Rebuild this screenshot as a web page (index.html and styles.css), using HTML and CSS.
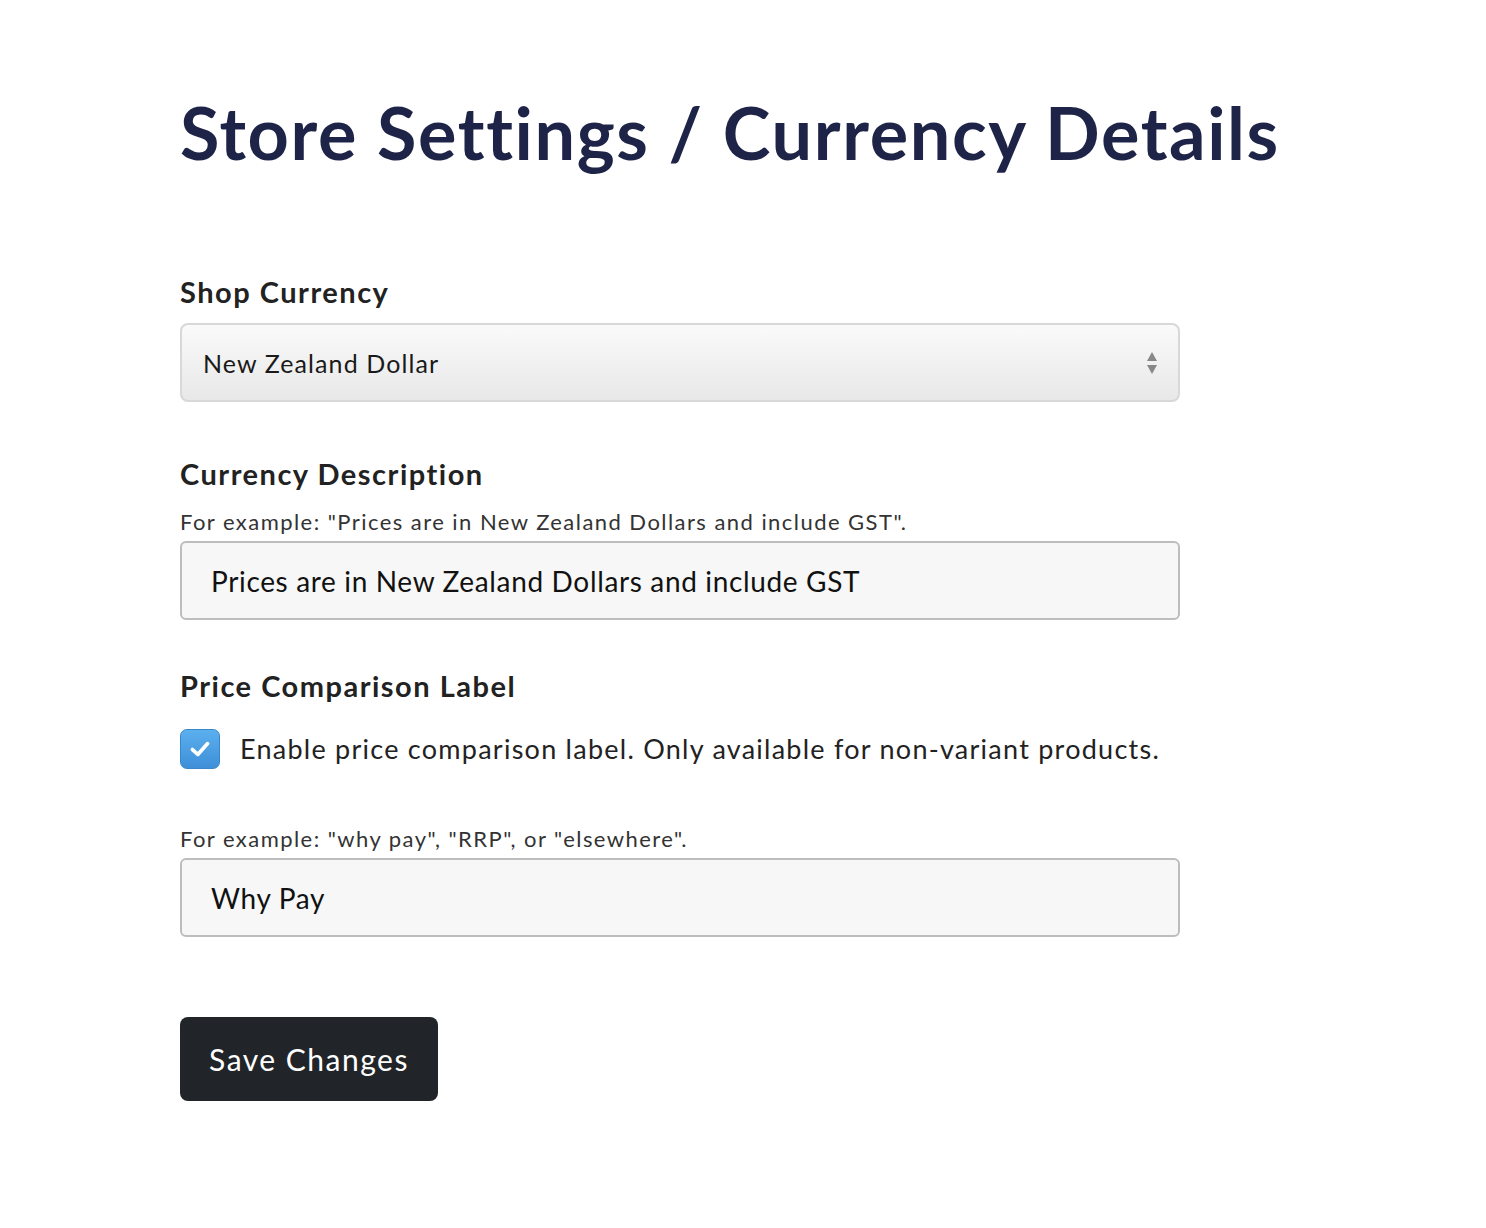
FILE: index.html
```html
<!DOCTYPE html>
<html lang="en">
<head>
<meta charset="utf-8">
<title>Store Settings / Currency Details</title>
<link rel="stylesheet" href="styles.css">
</head>
<body>
<main class="page">
  <h1 class="title">Store Settings / Currency Details</h1>
  <form class="form">
    <div class="field">
      <label class="label">Shop Currency</label>
      <div class="select">
        <span class="select-value">New Zealand Dollar</span>
        <svg class="select-arrows" width="12" height="24" viewBox="0 0 12 24"><path d="M6 1 L11 10 L1 10 Z" fill="#888"/><path d="M1 14 L11 14 L6 23 Z" fill="#888"/></svg>
      </div>
    </div>
    <div class="field field-tight">
      <label class="label">Currency Description</label>
      <p class="help">For example: "Prices are in New Zealand Dollars and include GST".</p>
      <div class="input">Prices are in New Zealand Dollars and include GST</div>
    </div>
    <div class="field">
      <label class="label">Price Comparison Label</label>
      <div class="check-row">
        <span class="checkbox"><svg width="26" height="26" viewBox="0 0 24 24"><path d="M5 12.5 L10 17 L19 7" fill="none" stroke="#fff" stroke-width="3.4" stroke-linecap="round" stroke-linejoin="round"/></svg></span>
        <span class="check-text">Enable price comparison label. Only available for non-variant products.</span>
      </div>
      <p class="help help-spaced">For example: "why pay", "RRP", or "elsewhere".</p>
      <div class="input">Why Pay</div>
    </div>
    <button type="button" class="btn">Save Changes</button>
  </form>
</main>
</body>
</html>
```

FILE: styles.css
```css
* { box-sizing: border-box; }
body {
  margin: 0;
  background: #fff;
  font-family: Lato, "Open Sans", "Liberation Sans", sans-serif;
  color: #212529;
}
.page {
  padding: 88px 0 0 180px;
}
.title {
  margin: 0;
  font-size: 72px;
  font-weight: 700;
  color: #1e2447;
  line-height: 88px;
  letter-spacing: 1.6px;
  white-space: nowrap;
}
.form {
  display: flex;
  flex-direction: column;
  width: 1000px;
  margin-top: 99px;
}
.field {
  display: flex;
  flex-direction: column;
  margin-bottom: 55px;
}
.field-tight { margin-bottom: 49px; }
.label {
  font-size: 29px;
  font-weight: 700;
  color: #222;
  line-height: 34px;
  letter-spacing: 1.5px;
  margin-bottom: 14px;
}
.select {
  height: 79px;
  border: 2px solid #d8d8d8;
  border-radius: 8px;
  background: linear-gradient(#fafafa, #e8e8e8);
  display: flex;
  align-items: center;
  justify-content: space-between;
  padding: 0 20px 0 21px;
}
.select-value { font-size: 25px; color: #1a1a1a; letter-spacing: 1.1px; }
.help {
  margin: 4px 0 6px;
  font-size: 22px;
  line-height: 26px;
  letter-spacing: 1.45px;
  color: #333;
}
.help-spaced { margin-top: 57px; }
.input {
  height: 79px;
  border: 2px solid #bdbdbd;
  border-radius: 6px;
  background: #f7f7f7;
  display: flex;
  align-items: center;
  padding: 0 29px;
  font-size: 28px;
  letter-spacing: 0.65px;
  color: #111;
}
.check-row {
  display: flex;
  align-items: center;
  gap: 20px;
  margin-top: 12px;
}
.checkbox {
  width: 40px;
  height: 40px;
  border-radius: 7px;
  background: linear-gradient(#5bb0ee, #3e8fd8);
  border: 1px solid #3a86cc;
  display: flex;
  align-items: center;
  justify-content: center;
}
.check-text { font-size: 27px; line-height: 34px; color: #222; letter-spacing: 1.25px; }
.btn {
  align-self: flex-start;
  margin-top: 25px;
  width: 258px;
  height: 84px;
  border: 0;
  border-radius: 8px;
  background: #212529;
  color: #fff;
  font-family: Lato, "Open Sans", "Liberation Sans", sans-serif;
  font-size: 30px;
  letter-spacing: 1.5px;
}
```
